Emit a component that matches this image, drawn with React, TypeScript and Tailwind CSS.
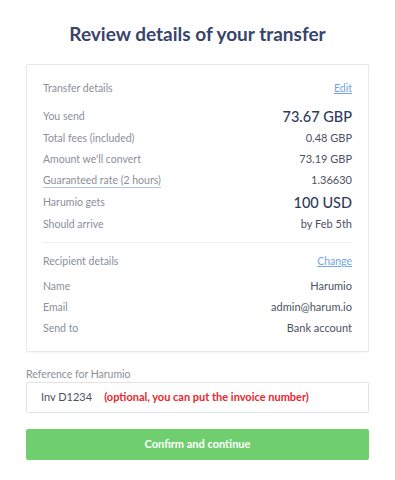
const transfer = [
  { label: "You send", value: "73.67 GBP", big: true },
  { label: "Total fees (included)", value: "0.48 GBP" },
  { label: "Amount we'll convert", value: "73.19 GBP" },
  { label: "Guaranteed rate (2 hours)", value: "1.36630", underline: true },
  { label: "Harumio gets", value: "100 USD", big: true },
  { label: "Should arrive", value: "by Feb 5th" },
];

const recipient = [
  { label: "Name", value: "Harumio" },
  { label: "Email", value: "admin@harum.io" },
  { label: "Send to", value: "Bank account" },
];

function Row({
  label,
  value,
  big,
  underline,
}: {
  label: string;
  value: string;
  big?: boolean;
  underline?: boolean;
}) {
  return (
    <div
      className={
        big
          ? "flex items-center justify-between h-[23px]"
          : "flex items-center justify-between h-[21px]"
      }
    >
      <span
        className={
          underline
            ? "text-[10.5px] text-[#8a8f99] border-b border-[#a9c5f0] leading-[13px]"
            : "text-[10.5px] text-[#8a8f99]"
        }
      >
        {label}
      </span>
      <span
        className={
          big
            ? "text-[14.5px] text-[#2f3b5c] font-medium"
            : "text-[11px] text-[#4c5263]"
        }
      >
        {value}
      </span>
    </div>
  );
}

export default function App() {
  return (
    <div className="w-[395px] h-[480px] bg-white font-['Lato',sans-serif] px-[26px] pt-[22px]">
      <h1 className="text-center text-[19px] font-bold text-[#37446b] leading-[24px]">
        Review details of your transfer
      </h1>

      <div className="mt-[18px] border border-[#e6e8eb] rounded-[2px] px-[16px] pt-[14px] pb-[12px] shadow-[0_1px_2px_rgba(0,0,0,0.04)]">
        <div className="flex items-center justify-between h-[20px]">
          <span className="text-[10.5px] text-[#8a8f99]">Transfer details</span>
          <a className="text-[10.5px] text-[#6fa6ec] underline">Edit</a>
        </div>
        <div className="mt-[6px] flex flex-col">
          {transfer.map((r) => (
            <Row key={r.label} {...r} />
          ))}
        </div>
        <hr className="mt-[7px] border-[#eceef0]" />
        <div className="mt-[9px] flex items-center justify-between h-[20px]">
          <span className="text-[10.5px] text-[#8a8f99]">Recipient details</span>
          <a className="text-[10.5px] text-[#6fa6ec] underline">Change</a>
        </div>
        <div className="mt-[4px] flex flex-col">
          {recipient.map((r) => (
            <Row key={r.label} {...r} />
          ))}
        </div>
      </div>

      <label className="block mt-[15px] text-[10.5px] leading-[14px] text-[#8a8f99]">
        Reference for Harumio
      </label>
      <div className="mt-[1px] h-[31px] border border-[#e1e4e8] rounded-[2px] flex items-center pl-[14px] gap-[12px]">
        <span className="text-[11px] text-[#4c5263]">Inv D1234</span>
        <span className="text-[11px] font-bold text-[#e8262d]">
          (optional, you can put the invoice number)
        </span>
      </div>

      <button className="mt-[16px] w-full h-[31px] rounded-[2px] bg-[#6fcf6f] text-white text-[11px] font-bold">
        Confirm and continue
      </button>
    </div>
  );
}
